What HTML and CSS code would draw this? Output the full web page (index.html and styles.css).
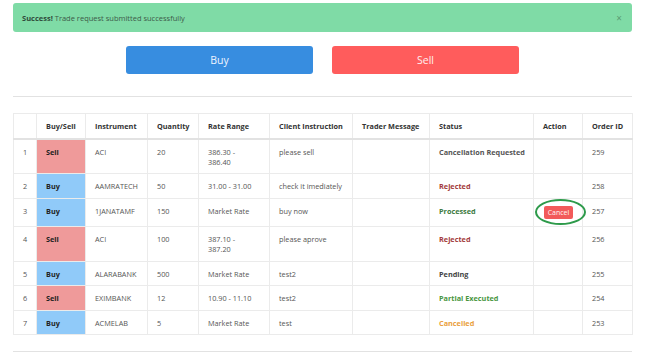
FILE: index.html
```html
<!DOCTYPE html>
<html>
<head>
<meta charset="utf-8">
<link rel="stylesheet" href="styles.css">
</head>
<body>
<div class="page">
  <div class="alert">
    <span class="alert-text"><strong>Success!</strong> Trade request submitted successfully</span>
    <span class="alert-close">×</span>
  </div>
  <div class="actions">
    <button class="btn btn-buy">Buy</button>
    <button class="btn btn-sell">Sell</button>
  </div>
  <hr class="rule">
  <table class="orders">
    <colgroup>
      <col style="width:23px"><col style="width:49px"><col style="width:62px"><col style="width:51px"><col style="width:71px"><col style="width:83px"><col style="width:77px"><col style="width:104px"><col style="width:49px"><col style="width:50px">
    </colgroup>
    <thead>
      <tr><th></th><th>Buy/Sell</th><th>Instrument</th><th>Quantity</th><th>Rate Range</th><th>Client Instruction</th><th>Trader Message</th><th>Status</th><th>Action</th><th>Order ID</th></tr>
    </thead>
    <tbody>
      <tr><td>1</td><td class="side sell">Sell</td><td>ACI</td><td>20</td><td class="rate">386.30 - 386.40</td><td>please sell</td><td></td><td class="st st-req">Cancellation Requested</td><td></td><td>259</td></tr>
      <tr><td>2</td><td class="side buy">Buy</td><td>AAMRATECH</td><td>50</td><td class="rate">31.00 - 31.00</td><td>check it imediately</td><td></td><td class="st st-rej">Rejected</td><td></td><td>258</td></tr>
      <tr><td>3</td><td class="side buy">Buy</td><td>1JANATAMF</td><td>150</td><td class="rate">Market Rate</td><td>buy now</td><td></td><td class="st st-proc">Processed</td><td><span class="cancel-wrap"><button class="btn-cancel">Cancel</button><span class="ring"></span></span></td><td>257</td></tr>
      <tr><td>4</td><td class="side sell">Sell</td><td>ACI</td><td>100</td><td class="rate">387.10 - 387.20</td><td>please aprove</td><td></td><td class="st st-rej">Rejected</td><td></td><td>256</td></tr>
      <tr><td>5</td><td class="side buy">Buy</td><td>ALARABANK</td><td>500</td><td class="rate">Market Rate</td><td>test2</td><td></td><td class="st st-pend">Pending</td><td></td><td>255</td></tr>
      <tr><td>6</td><td class="side sell">Sell</td><td>EXIMBANK</td><td>12</td><td class="rate">10.90 - 11.10</td><td>test2</td><td></td><td class="st st-part">Partial Executed</td><td></td><td>254</td></tr>
      <tr><td>7</td><td class="side buy">Buy</td><td>ACMELAB</td><td>5</td><td class="rate">Market Rate</td><td>test</td><td></td><td class="st st-canc">Cancelled</td><td></td><td>253</td></tr>
    </tbody>
  </table>
  <hr class="rule rule-bottom">
</div>
</body>
</html>
```
FILE: styles.css
```css
html, body {
  margin: 0;
  padding: 0;
  background: #fff;
}
body {
  font-family: "Open Sans", "Liberation Sans", sans-serif;
  color: #555;
}
.page {
  padding: 3px 19px 0 13px;
}
.alert {
  display: flex;
  align-items: center;
  justify-content: space-between;
  height: 29px;
  padding: 0 9px;
  box-sizing: border-box;
  background: #7fdba6;
  border-radius: 3px;
  font-size: 7.5px;
  color: #3d5a48;
}
.alert strong {
  font-weight: 700;
  color: #2f4a3a;
}
.alert-close {
  font-size: 10px;
  color: #5c9c74;
  line-height: 1;
  margin-right: 1px;
}
.actions {
  display: flex;
  justify-content: center;
  gap: 19px;
  margin-top: 14px;
}
.btn {
  width: 187px;
  height: 28px;
  border: 0;
  border-radius: 3px;
  font-family: "Open Sans", "Liberation Sans", sans-serif;
  font-size: 10.5px;
  color: #eef4ff;
  padding: 0;
}
.btn-buy { background: #378de0; }
.btn-sell { background: #ff5c5c; color: #ffeeee; }
.rule {
  border: 0;
  border-top: 1px solid #e2e2e2;
  margin: 22px 0 16px;
}
.rule-bottom {
  margin: 16px 0 0;
}
.orders {
  width: 619px;
  table-layout: fixed;
  border-collapse: collapse;
  font-size: 7.3px;
  line-height: 10px;
}
.orders th, .orders td {
  border: 1px solid #ebebeb;
  padding: 7px 5px 6.5px 9px;
  text-align: left;
  vertical-align: top;
}
.orders td.rate {
  padding-right: 12px;
}
.orders th {
  font-weight: 700;
  color: #333;
  border-bottom: 2px solid #e2e2e2;
}
.orders td { color: #555; }
.orders td.side {
  font-weight: 700;
  color: #222;
}
.side.sell { background: #ef9a9a; color: #3a1515; }
.side.buy { background: #90caf9; color: #172a45; }
.st { font-weight: 700; }
.orders td.st-req { color: #555; }
.orders td.st-rej { color: #a33b3b; }
.orders td.st-proc { color: #3d7a3e; }
.orders td.st-pend { color: #444; }
.orders td.st-part { color: #4a963f; }
.orders td.st-canc { color: #eaa040; }
.cancel-wrap {
  position: relative;
  display: inline-block;
  margin-left: 1px;
}
.btn-cancel {
  display: block;
  height: 13px;
  width: 29px;
  margin-bottom: 1px;
  border: 0;
  border-radius: 2px;
  padding: 0;
  background: #f25a5a;
  color: #fff2f2;
  font-family: "Open Sans", "Liberation Sans", sans-serif;
  font-size: 7px;
  line-height: 13px;
}
.ring {
  position: absolute;
  left: -9px;
  top: -7px;
  width: 51px;
  height: 26px;
  box-sizing: border-box;
  border: 2px solid #2d9a4a;
  border-radius: 50%;
}
```
